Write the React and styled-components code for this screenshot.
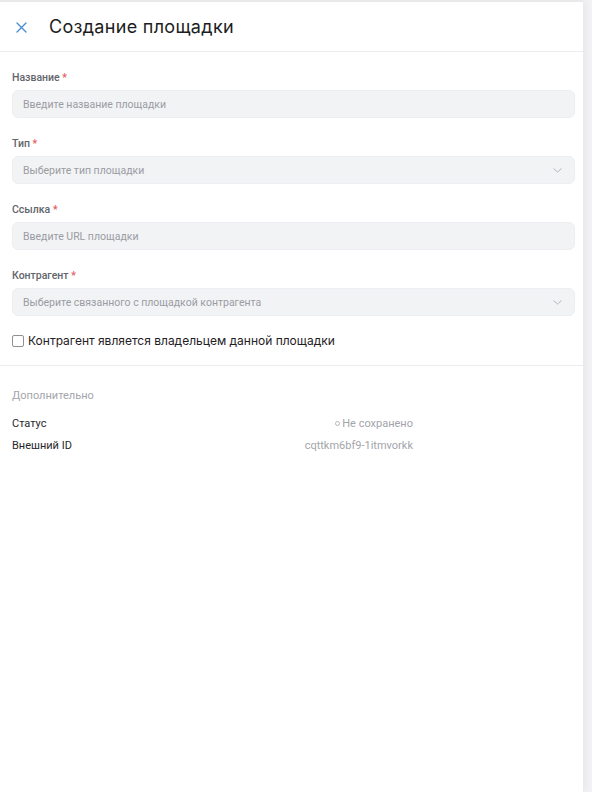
import React from "react";
import styled, { createGlobalStyle } from "styled-components";

const GlobalStyle = createGlobalStyle`
  html, body {
    margin: 0;
    padding: 0;
    background: #f3f3f5;
  }
  body {
    font-family: Roboto, "Noto Sans", sans-serif;
  }
`;

const fields = [
  { label: "Название", placeholder: "Введите название площадки", select: false },
  { label: "Тип", placeholder: "Выберите тип площадки", select: true },
  { label: "Ссылка", placeholder: "Введите URL площадки", select: false },
  {
    label: "Контрагент",
    placeholder: "Выберите связанного с площадкой контрагента",
    select: true,
  },
];

const CloseIcon = () => (
  <svg width="11" height="11" viewBox="0 0 11 11" fill="none">
    <path d="M1 1L10 10M10 1L1 10" stroke="#4a8ed0" strokeWidth="1.4" strokeLinecap="round" />
  </svg>
);

const Chevron = () => (
  <svg width="9" height="5" viewBox="0 0 9 5" fill="none">
    <path d="M0.8 0.8L4.5 4L8.2 0.8" stroke="#b4b6bc" strokeWidth="1" strokeLinecap="round" strokeLinejoin="round" />
  </svg>
);

export default function App() {
  return (
    <>
      <GlobalStyle />
      <Panel>
        <Header>
          <CloseButton>
            <CloseIcon />
          </CloseButton>
          <Title>Создание площадки</Title>
        </Header>
        <Form>
          {fields.map((f) => (
            <Field key={f.label}>
              <Label>
                {f.label} <Required>*</Required>
              </Label>
              <InputBox>
                <Placeholder>{f.placeholder}</Placeholder>
                {f.select && <Chevron />}
              </InputBox>
            </Field>
          ))}
          <CheckRow>
            <CheckBox />
            <CheckText>Контрагент является владельцем данной площадки</CheckText>
          </CheckRow>
        </Form>
        <Extra>
          <ExtraTitle>Дополнительно</ExtraTitle>
          <InfoGrid>
            <InfoLabel>Статус</InfoLabel>
            <InfoValue>
              <StatusDot />
              Не сохранено
            </InfoValue>
            <InfoLabel>Внешний ID</InfoLabel>
            <InfoValue>cqttkm6bf9-1itmvorkk</InfoValue>
          </InfoGrid>
        </Extra>
      </Panel>
    </>
  );
}

const Panel = styled.div`
  width: 583px;
  min-height: 792px;
  background: #fff;
  border-top: 2px solid #e9e9ec;
  box-sizing: border-box;
  box-shadow: 3px 0 8px rgba(0, 0, 0, 0.05);
`;

const Header = styled.header`
  height: 49px;
  display: flex;
  align-items: center;
  padding: 0 0 0 16px;
  border-bottom: 1px solid #ececef;
`;

const CloseButton = styled.div`
  width: 11px;
  height: 11px;
  display: flex;
  margin-right: 22px;
  margin-top: 2px;
`;

const Title = styled.h1`
  margin: 0;
  font-family: Inter, "Noto Sans", sans-serif;
  font-weight: 400;
  font-size: 18px;
  letter-spacing: 0.3px;
  color: #1c1d21;
`;

const Form = styled.div`
  padding: 19px 8px 17px 12px;
  display: flex;
  flex-direction: column;
  gap: 19px;
  border-bottom: 1px solid #ececef;
`;

const Field = styled.div`
  display: flex;
  flex-direction: column;
  gap: 6px;
`;

const Label = styled.div`
  font-size: 10.5px;
  font-weight: 500;
  color: #62646b;
  line-height: 13px;
`;

const Required = styled.span`
  color: #e4575d;
`;

const InputBox = styled.div`
  height: 28px;
  border-radius: 6px;
  background: #f2f3f5;
  border: 1px solid #eceef1;
  box-sizing: border-box;
  display: flex;
  align-items: center;
  justify-content: space-between;
  padding: 0 12px 0 10px;
`;

const Placeholder = styled.span`
  font-size: 10.5px;
  color: #9a9ca3;
`;

const CheckRow = styled.label`
  display: flex;
  align-items: center;
  gap: 4px;
  margin-top: -2px;
`;

const CheckBox = styled.span`
  width: 10px;
  height: 10px;
  border: 1px solid #8d9096;
  border-radius: 2px;
  background: #fff;
`;

const CheckText = styled.span`
  font-family: Inter, "Noto Sans", sans-serif;
  font-size: 12px;
  color: #1f2024;
`;

const Extra = styled.section`
  padding: 23px 12px;
`;

const ExtraTitle = styled.div`
  font-size: 11px;
  color: #a3a5ab;
  margin-bottom: 15px;
`;

const InfoGrid = styled.div`
  display: grid;
  grid-template-columns: 1fr auto;
  width: 401px;
  row-gap: 9px;
  font-size: 11px;
  line-height: 13px;
`;

const InfoLabel = styled.div`
  color: #26272b;
`;

const InfoValue = styled.div`
  color: #a3a5ab;
  text-align: right;
  display: flex;
  align-items: center;
  justify-content: flex-end;
  gap: 2px;
`;

const StatusDot = styled.span`
  width: 3px;
  height: 3px;
  border: 1.2px solid #b3b5ba;
  border-radius: 50%;
`;
